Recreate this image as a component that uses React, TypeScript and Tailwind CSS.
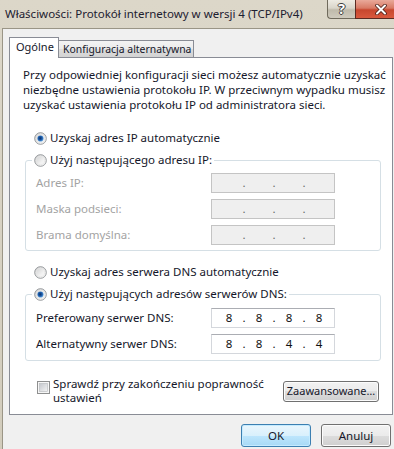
import { Fragment } from "react"

// przycisk opcji w stylu Windows 7
function Radio({ checked }: { checked?: boolean }) {
  return (
    <svg width="13" height="13" viewBox="0 0 13 13" className="shrink-0">
      <defs>
        <linearGradient id="rbFill" x1="0" y1="0" x2="1" y2="1">
          <stop offset="0" stopColor="#c9cacb" />
          <stop offset="0.6" stopColor="#f1f1f1" />
          <stop offset="1" stopColor="#ffffff" />
        </linearGradient>
        <radialGradient id="rbDot" cx="0.45" cy="0.45" r="0.6">
          <stop offset="0" stopColor="#0b2f66" />
          <stop offset="0.55" stopColor="#1f5fae" />
          <stop offset="1" stopColor="#7ab8ec" />
        </radialGradient>
      </defs>
      <circle cx="6.5" cy="6.5" r="5.8" fill="url(#rbFill)" stroke="#8a8d91" strokeWidth="0.9" />
      <circle cx="6.5" cy="6.5" r="4.3" fill="none" stroke="#e4e4e4" strokeWidth="0.8" />
      {checked && <circle cx="6.5" cy="6.5" r="3.1" fill="url(#rbDot)" />}
    </svg>
  )
}

function Checkbox() {
  return (
    <svg width="13" height="13" viewBox="0 0 13 13" className="shrink-0">
      <defs>
        <linearGradient id="cbFill" x1="0" y1="0" x2="1" y2="1">
          <stop offset="0" stopColor="#c4c7cc" />
          <stop offset="1" stopColor="#f4f4f4" />
        </linearGradient>
      </defs>
      <rect x="0.5" y="0.5" width="12" height="12" fill="#f6f6f6" stroke="#8e8f8f" />
      <rect x="2.5" y="2.5" width="8" height="8" fill="url(#cbFill)" stroke="#b4b7bb" strokeWidth="0.6" />
    </svg>
  )
}

function IpBox({ value, disabled }: { value?: string[]; disabled?: boolean }) {
  const parts = value ?? ["", "", "", ""]
  return (
    <div
      className={
        disabled
          ? "flex h-[20px] w-[124px] items-center border border-[#c4c4c4] bg-[#efefef] pl-[5px] text-[#6a6a6a]"
          : "flex h-[20px] w-[124px] items-center border border-[#d4d7dc] border-t-[#abadb3] bg-white pl-[5px] text-[#111]"
      }
    >
      {parts.map((p, i) => (
        <Fragment key={i}>
          {i > 0 && <span className="w-[6px] text-center">.</span>}
          <span className="w-[24px] text-center">{p}</span>
        </Fragment>
      ))}
    </div>
  )
}

function Row({ label, value, disabled }: { label: string; value?: string[]; disabled?: boolean }) {
  return (
    <div className="flex h-[20px] items-center">
      <span className={disabled ? "w-[175px] text-[#a3a3a3]" : "w-[175px]"}>{label}</span>
      <IpBox value={value} disabled={disabled} />
    </div>
  )
}

const btn =
  "flex items-center justify-center rounded-[3px] border border-[#707070] bg-[linear-gradient(to_bottom,#f2f2f2_0%,#ebebeb_50%,#dddddd_50%,#cfcfcf_100%)] shadow-[inset_0_0_0_1px_#fcfcfc]"

export default function App() {
  return (
    <div className="h-[449px] w-[394px] overflow-hidden bg-[linear-gradient(to_bottom,#dcd7c9,#d2ccbc)] font-['Segoe_UI','Noto_Sans',sans-serif] text-[11.5px] text-[#15172a]">

      {/* PASEK TYTUŁU */}
      <div className="flex h-[28px] items-start">
        <div className="flex h-[28px] items-center whitespace-nowrap pl-[5px] text-[11.5px] text-[#1d2030]">
          Właściwości: Protokół internetowy w wersji 4 (TCP/IPv4)
        </div>
        <div className="ml-auto flex">
          <div className="flex h-[19px] w-[28px] items-center justify-center rounded-bl-[4px] border border-t-0 border-r-0 border-[#6f6a5c] bg-[linear-gradient(to_bottom,#eeebe3_0%,#d9d5ca_45%,#bfbaab_55%,#cfcabd_100%)] text-[14px] font-bold leading-none text-white [text-shadow:1px_0_#3d3d3d,-1px_0_#3d3d3d,0_1px_#3d3d3d,0_-1px_#3d3d3d]">
            ?
          </div>
          <div className="flex h-[19px] w-[39px] items-center border-b border-l border-[#5b2a22] bg-[linear-gradient(to_bottom,#e9a99a_0%,#d87a65_45%,#c7462e_55%,#d9593e_100%)] pl-[19px]">
            <svg width="12" height="11" viewBox="0 0 12 11">
              <path d="M2 1.5 L10 9.5 M10 1.5 L2 9.5" stroke="#4a1d16" strokeWidth="3.6" strokeLinecap="round" />
              <path d="M2 1.5 L10 9.5 M10 1.5 L2 9.5" stroke="#ffffff" strokeWidth="2" strokeLinecap="round" />
            </svg>
          </div>
        </div>
      </div>

      {/* ZAWARTOŚĆ OKNA */}
      <div className="ml-[2px] h-[421px] border-l border-t border-[#9a9586] bg-[#f0f0f0] pl-[6px] pt-[8px]">

        {/* ZAKŁADKI */}
        <div className="flex h-[20px] items-end">
          <div className="relative z-10 -mb-px h-[21px] w-[50px] border border-b-0 border-[#898c95] bg-white pl-[6px] pt-px text-[11px] leading-[15px]">
            Ogólne
          </div>
          <div className="flex h-[17px] w-[135px] items-center whitespace-nowrap border border-b-0 border-l-0 border-[#898c95] bg-[linear-gradient(to_bottom,#f3f3f3_0%,#ebebeb_50%,#dddddd_50%,#d3d3d3_100%)] pl-[4px] text-[10.4px] leading-[15px]">
            Konfiguracja alternatywna
          </div>
        </div>

        {/* PANEL */}
        <div className="h-[358px] w-[384px] border border-[#898c95] bg-white">
          <p className="pl-[13px] pt-[9px] leading-[15px]">
            Przy odpowiedniej konfiguracji sieci możesz automatycznie uzyskać
            <br />
            niezbędne ustawienia protokołu IP. W przeciwnym wypadku musisz
            <br />
            uzyskać ustawienia protokołu IP od administratora sieci.
          </p>

          <div className="ml-[24px] mt-[19px] flex h-[14px] items-center gap-[3px]">
            <Radio checked />
            <span>Uzyskaj adres IP automatycznie</span>
          </div>

          <fieldset className="ml-[15px] mt-[8px] w-[356px] rounded-[3px] border border-[#d5dfe5] pb-[5px] pl-[6px]">
            <legend className="px-[2px]">
              <div className="flex h-[14px] items-center gap-[3px]">
                <Radio />
                <span>Użyj następującego adresu IP:</span>
              </div>
            </legend>
            <div className="flex flex-col gap-[6px] pl-[4px] pt-[6px]">
              <Row label="Adres IP:" disabled />
              <Row label="Maska podsieci:" disabled />
              <Row label="Brama domyślna:" disabled />
            </div>
          </fieldset>

          <div className="ml-[24px] mt-[14px] flex h-[14px] items-center gap-[3px]">
            <Radio />
            <span>Uzyskaj adres serwera DNS automatycznie</span>
          </div>

          <fieldset className="ml-[15px] mt-[8px] w-[356px] rounded-[3px] border border-[#d5dfe5] pb-[6px] pl-[6px]">
            <legend className="px-[2px]">
              <div className="flex h-[14px] items-center gap-[3px]">
                <Radio checked />
                <span>Użyj następujących adresów serwerów DNS:</span>
              </div>
            </legend>
            <div className="flex flex-col gap-[6px] pl-[4px] pt-[7px]">
              <Row label="Preferowany serwer DNS:" value={["8", "8", "8", "8"]} />
              <Row label="Alternatywny serwer DNS:" value={["8", "8", "4", "4"]} />
            </div>
          </fieldset>

          <div className="ml-[27px] mt-[16px] flex w-[342px] items-start justify-between">
            <div className="flex items-start gap-[3px]">
              <div className="mt-[4px]">
                <Checkbox />
              </div>
              <span className="leading-[14px]">
                Sprawdź przy zakończeniu poprawność
                <br />
                ustawień
              </span>
            </div>
            <button className={`${btn} mt-[4px] h-[21px] w-[96px] text-[11px]`}>Zaawansowane…</button>
          </div>
        </div>

        {/* PRZYCISKI */}
        <div className="mt-[9px] flex w-[384px] justify-end gap-[10px] pr-[2px]">
          <button className="flex h-[23px] w-[70px] items-center justify-center rounded-[3px] border border-[#3c7fb1] bg-[linear-gradient(to_bottom,#eaf6fd_0%,#d9f0fc_50%,#bee6fd_50%,#a7d9f5_100%)] shadow-[inset_0_0_0_1px_#c5ebff]">
            OK
          </button>
          <button className={`${btn} h-[23px] w-[70px]`}>Anuluj</button>
        </div>
      </div>
    </div>
  )
}
